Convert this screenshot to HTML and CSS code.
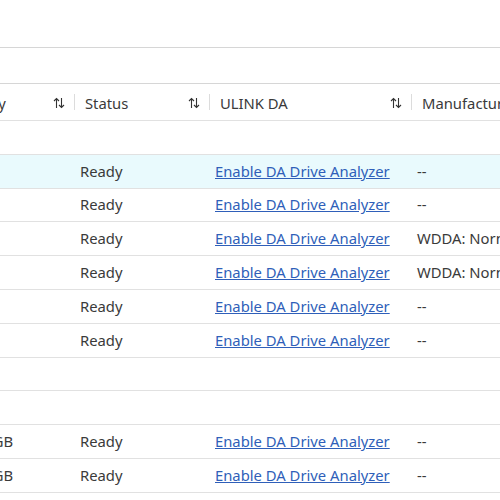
FILE: index.html
```html
<!DOCTYPE html>
<html>
<head>
<meta charset="utf-8">
<link rel="stylesheet" href="styles.css">
</head>
<body>
<div class="view">
  <div class="toolbar"></div>
  <div class="filter-row"></div>
  <div class="table">
    <div class="row head">
      <div class="hcell"><span class="label">Capacity</span><svg class="sort" viewBox="0 0 12 12"><path d="M3.5 11V1.5M1 4L3.5 1.5 6 4M8.5 1v9.5M6 8l2.5 2.5L11 8"/></svg></div>
      <div class="hcell"><span class="label">Status</span><svg class="sort" viewBox="0 0 12 12"><path d="M3.5 11V1.5M1 4L3.5 1.5 6 4M8.5 1v9.5M6 8l2.5 2.5L11 8"/></svg></div>
      <div class="hcell"><span class="label">ULINK DA</span><svg class="sort" viewBox="0 0 12 12"><path d="M3.5 11V1.5M1 4L3.5 1.5 6 4M8.5 1v9.5M6 8l2.5 2.5L11 8"/></svg></div>
      <div class="hcell last"><span class="label">Manufacturer</span></div>
    </div>
    <div class="row group"></div>
    <div class="row selected"><div class="cell"></div><div class="cell">Ready</div><div class="cell"><a href="#">Enable DA Drive Analyzer</a></div><div class="cell">--</div></div>
    <div class="row"><div class="cell"></div><div class="cell">Ready</div><div class="cell"><a href="#">Enable DA Drive Analyzer</a></div><div class="cell">--</div></div>
    <div class="row"><div class="cell"></div><div class="cell">Ready</div><div class="cell"><a href="#">Enable DA Drive Analyzer</a></div><div class="cell">WDDA: Normal</div></div>
    <div class="row"><div class="cell"></div><div class="cell">Ready</div><div class="cell"><a href="#">Enable DA Drive Analyzer</a></div><div class="cell">WDDA: Normal</div></div>
    <div class="row"><div class="cell"></div><div class="cell">Ready</div><div class="cell"><a href="#">Enable DA Drive Analyzer</a></div><div class="cell">--</div></div>
    <div class="row"><div class="cell"></div><div class="cell">Ready</div><div class="cell"><a href="#">Enable DA Drive Analyzer</a></div><div class="cell">--</div></div>
    <div class="row group"></div>
    <div class="row group"></div>
    <div class="row"><div class="cell size">931.5 GB</div><div class="cell">Ready</div><div class="cell"><a href="#">Enable DA Drive Analyzer</a></div><div class="cell">--</div></div>
    <div class="row"><div class="cell size">931.5 GB</div><div class="cell">Ready</div><div class="cell"><a href="#">Enable DA Drive Analyzer</a></div><div class="cell">--</div></div>
  </div>
</div>
</body>
</html>
```

FILE: styles.css
```css
html, body {
  margin: 0;
  padding: 0;
  background: #ffffff;
  overflow: hidden;
}

body {
  font-family: "Noto Sans", "Open Sans", sans-serif;
  font-size: 14.8px;
  color: #3a3a3a;
}

.view {
  width: 500px;
  height: 500px;
  overflow: hidden;
}

.toolbar {
  height: 47px;
  border-bottom: 1px solid #d6d6d6;
}

.filter-row {
  height: 35px;
  border-bottom: 1px solid #d6d6d6;
}

.table {
  margin-left: -63px;
  width: 700px;
}

.row {
  display: grid;
  grid-template-columns: 138px 135px 202px 1fr;
  height: 33.8px;
  box-sizing: border-box;
  border-bottom: 1px solid #e1e1e1;
  align-items: center;
}

.row.head {
  height: 37px;
  border-bottom: 1px solid #e1e1e1;
}

.row.head .hcell {
  padding-top: 1px;
}

.row.selected {
  background: #e9fafd;
}

.hcell {
  display: flex;
  align-items: center;
  height: 100%;
  padding-left: 10px;
  box-sizing: border-box;
  position: relative;
  white-space: nowrap;
  overflow: hidden;
}

.hcell .label {
  flex: 1;
}

.hcell .sort {
  width: 12px;
  height: 12px;
  margin-right: 10px;
  fill: none;
  stroke: #333333;
  stroke-width: 1.1;
}

.hcell::after {
  content: "";
  position: absolute;
  right: 0;
  top: 10px;
  bottom: 10px;
  border-right: 1px solid #dcdcdc;
}

.hcell.last::after {
  display: none;
}

.cell {
  padding-left: 5px;
  padding-bottom: 1px;
  white-space: nowrap;
  overflow: hidden;
}

.cell.size {
  padding-left: 14px;
}

.cell a {
  color: #2f5fb9;
  text-decoration: underline;
}
```
